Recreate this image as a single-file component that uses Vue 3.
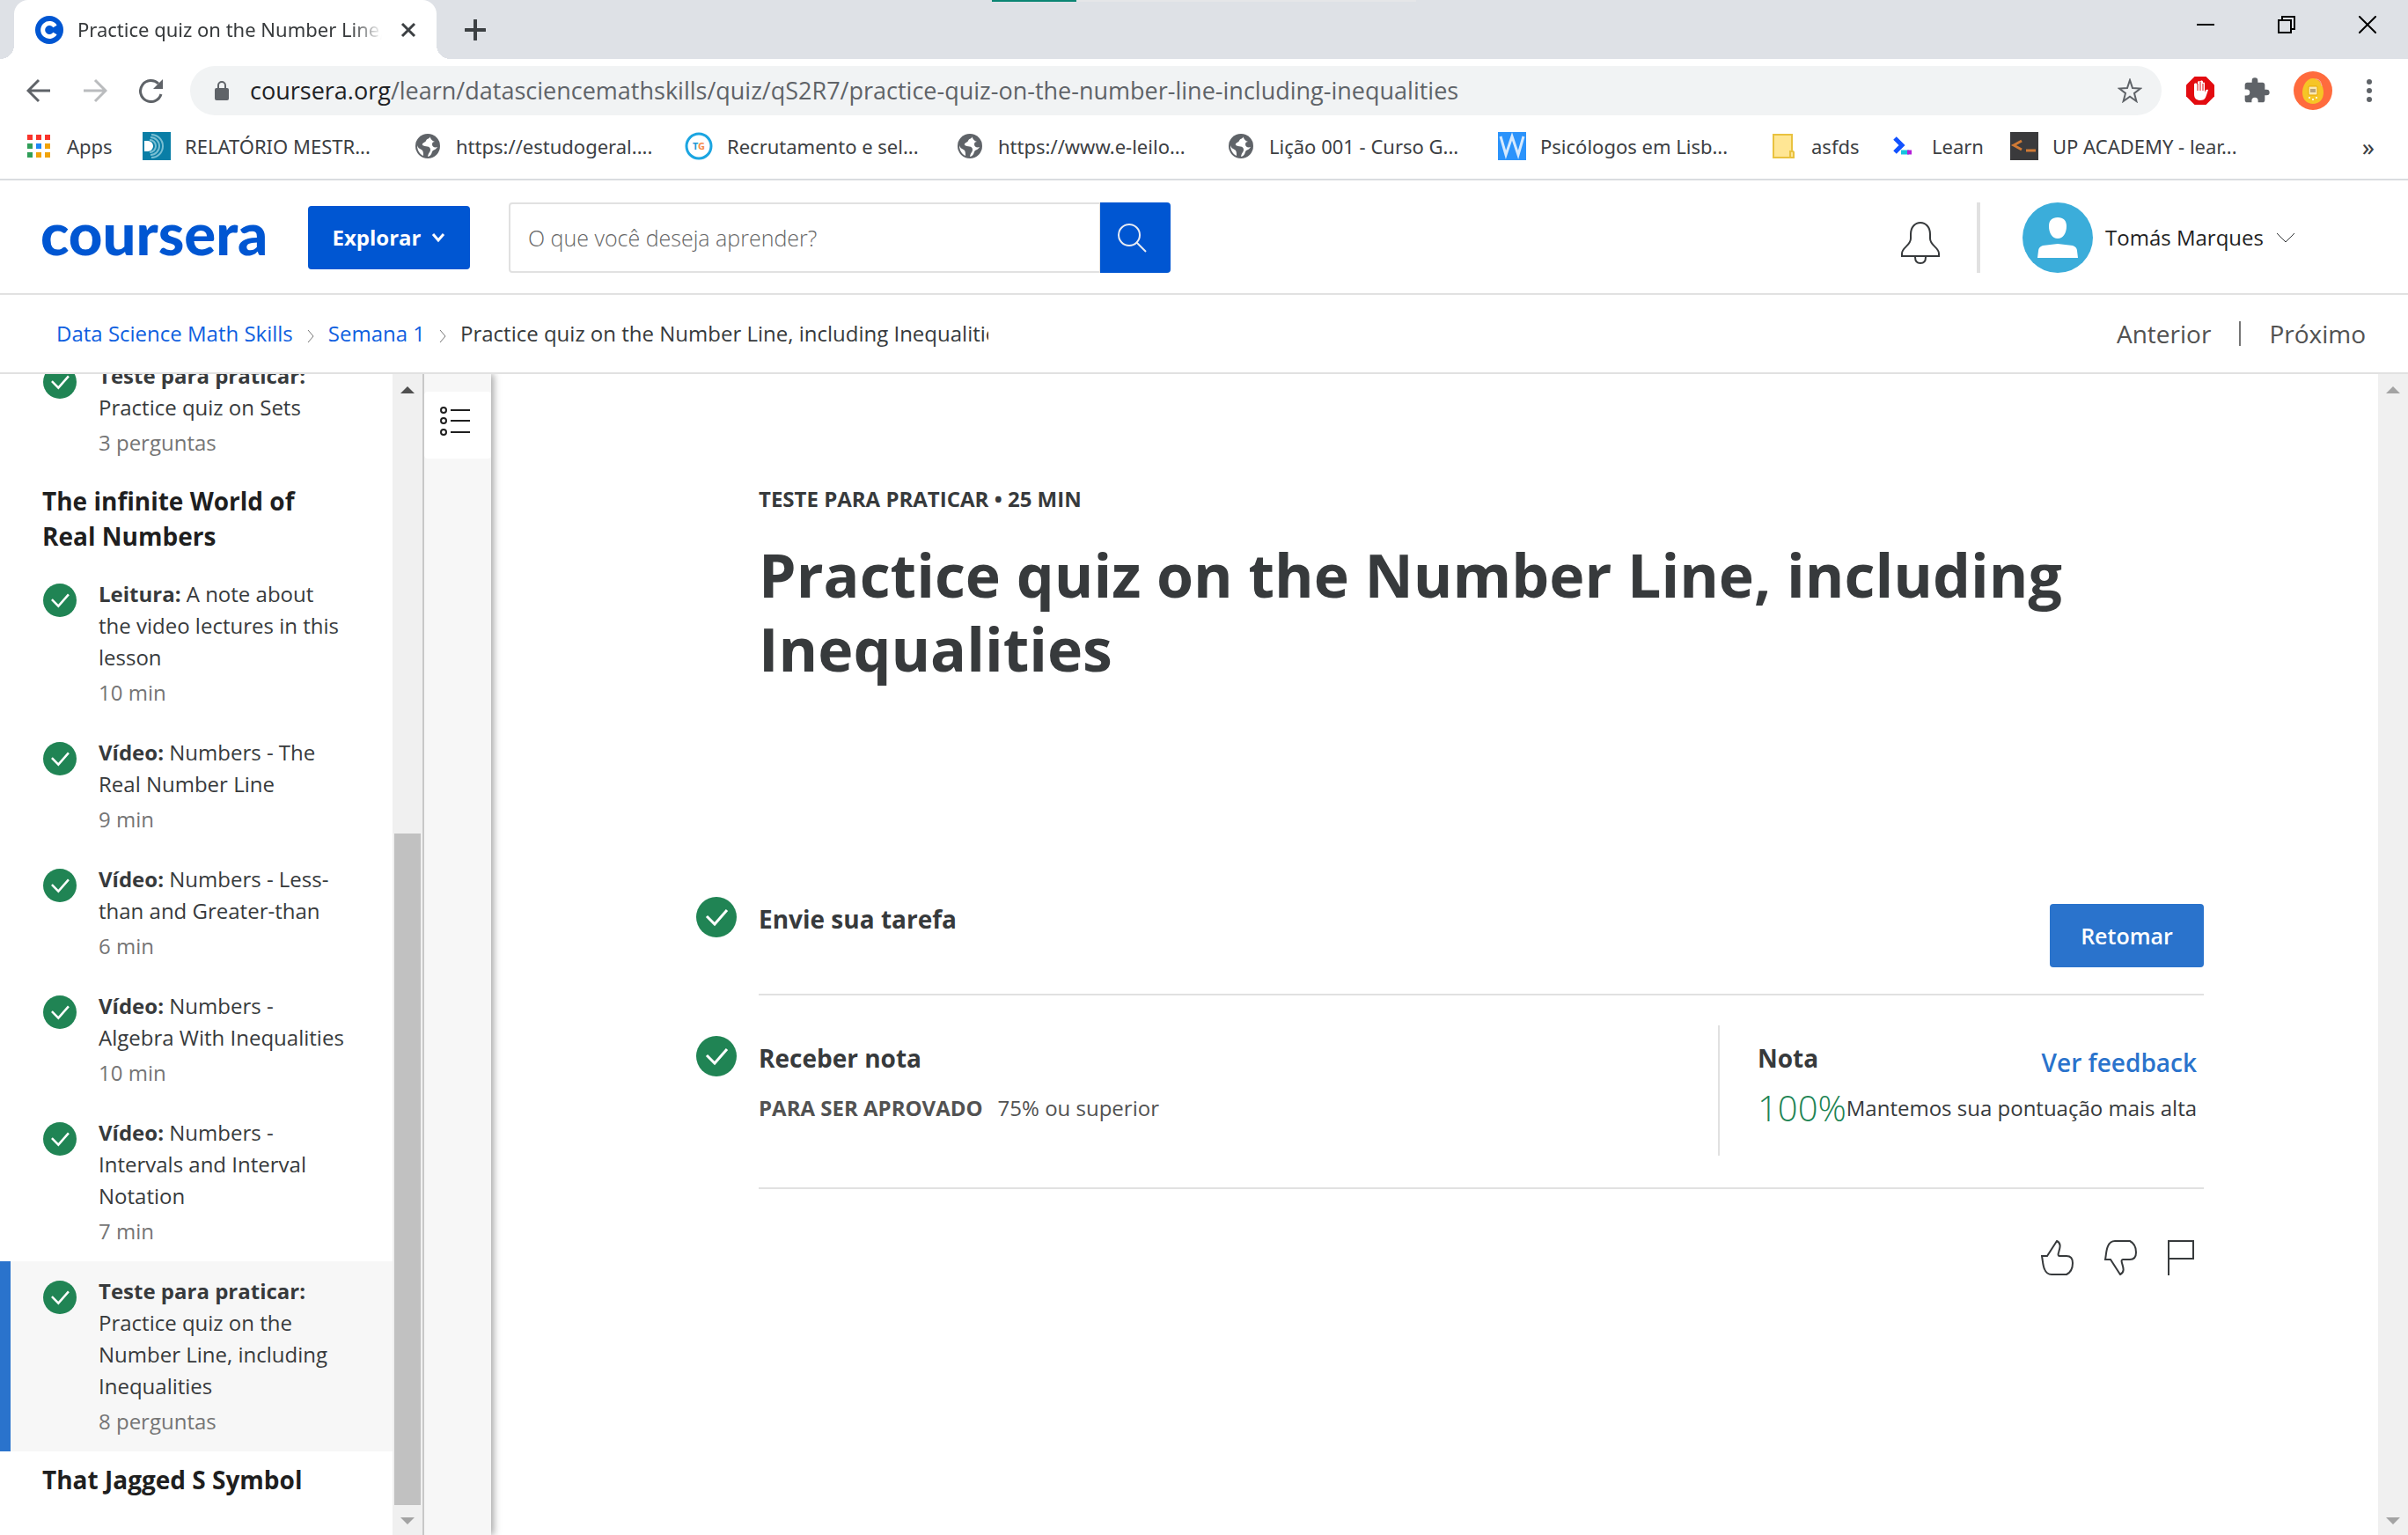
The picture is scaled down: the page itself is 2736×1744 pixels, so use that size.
<script setup>
import { ref } from 'vue'

const address = ref('/learn/datasciencemathskills/quiz/qS2R7/practice-quiz-on-the-number-line-including-inequalities')
const query = ref('')

const bookmarks = [
  { icon: 'apps', text: 'Apps', size: 'first' },
  { icon: 'waves', text: 'RELATÓRIO MESTR...', size: 'long' },
  { icon: 'globe', text: 'https://estudogeral....', size: 'long' },
  { icon: 'tg', text: 'Recrutamento e sel...', size: 'long' },
  { icon: 'globe', text: 'https://www.e-leilo...', size: 'long' },
  { icon: 'globe', text: 'Lição 001 - Curso G...', size: 'long' },
  { icon: 'w', text: 'Psicólogos em Lisb...', size: 'long' },
  { icon: 'folder', text: 'asfds', size: 'short' },
  { icon: 'learn', text: 'Learn', size: 'short' },
  { icon: 'up', text: 'UP ACADEMY - lear...', size: 'long' },
]

const lessons = [
  {
    title: '',
    items: [{ kind: 'Teste para praticar:', name: 'Practice quiz on Sets', meta: '3 perguntas' }],
  },
  {
    title: 'The infinite World of Real Numbers',
    items: [
      { kind: 'Leitura:', name: 'A note about the video lectures in this lesson', meta: '10 min' },
      { kind: 'Vídeo:', name: 'Numbers - The Real Number Line', meta: '9 min' },
      { kind: 'Vídeo:', name: 'Numbers - Less-than and Greater-than', meta: '6 min' },
      { kind: 'Vídeo:', name: 'Numbers - Algebra With Inequalities', meta: '10 min' },
      { kind: 'Vídeo:', name: 'Numbers - Intervals and Interval Notation', meta: '7 min' },
      { kind: 'Teste para praticar:', name: 'Practice quiz on the Number Line, including Inequalities', meta: '8 perguntas', current: true },
    ],
  },
  { title: 'That Jagged S Symbol', items: [] },
]
</script>

<template>
  <div class="window">
    <header class="browser">
      <div class="tabstrip">
        <div class="tab">
          <svg class="favicon" viewBox="0 0 32 32" width="32" height="32" aria-hidden="true">
            <circle cx="16" cy="16" r="16" fill="#0056d2" />
            <path d="M22.5 12a7.5 7.5 0 1 0 0 8" fill="none" stroke="#fff" stroke-width="5" />
          </svg>
          <span class="tab-title">Practice quiz on the Number Line, including</span>
          <button class="plain tab-close" aria-label="Close tab">
            <svg viewBox="0 0 18 18" width="18" height="18"><path d="M2 2l14 14M16 2L2 16" stroke="#3c4043" stroke-width="3" /></svg>
          </button>
        </div>
        <button class="plain new-tab" aria-label="New tab">
          <svg viewBox="0 0 24 24" width="24" height="24"><path d="M12 1v22M1 12h22" stroke="#3c4043" stroke-width="4" stroke-linecap="round" /></svg>
        </button>
        <div class="share-strip"><span></span></div>
        <div class="controls">
          <button class="plain" aria-label="Minimize">
            <svg viewBox="0 0 20 20" width="20" height="20"><path d="M0 10h20" stroke="#000" stroke-width="2" /></svg>
          </button>
          <button class="plain" aria-label="Restore">
            <svg viewBox="0 0 20 20" width="20" height="20"><path d="M1 5h14v14H1zM5 5V1h14v14h-4" fill="none" stroke="#000" stroke-width="2" /></svg>
          </button>
          <button class="plain" aria-label="Close">
            <svg viewBox="0 0 20 20" width="20" height="20"><path d="M0 0l20 20M20 0L0 20" stroke="#000" stroke-width="2" /></svg>
          </button>
        </div>
      </div>

      <div class="toolbar">
        <button class="plain tool" aria-label="Back">
          <svg viewBox="0 0 28 28" width="28" height="28"><path d="M27 14H3M14 2L2 14l12 12" fill="none" stroke="#5f6368" stroke-width="3" /></svg>
        </button>
        <button class="plain tool" aria-label="Forward">
          <svg viewBox="0 0 28 28" width="28" height="28"><path d="M1 14h24M14 2l12 12-12 12" fill="none" stroke="#babcbe" stroke-width="3" /></svg>
        </button>
        <button class="plain tool" aria-label="Reload">
          <svg viewBox="0 0 28 28" width="28" height="28"><path d="M25 18a12 12 0 1 1-3-12" fill="none" stroke="#5f6368" stroke-width="3" /><path d="M27 1v11H16z" fill="#5f6368" /></svg>
        </button>
        <div class="omnibox">
          <svg viewBox="0 0 16 22" width="16" height="22" aria-hidden="true"><rect y="8" width="16" height="14" rx="2" fill="#5f6368" /><path d="M4 9V5a4 4 0 0 1 8 0v4" fill="none" stroke="#5f6368" stroke-width="2" /></svg>
          <label class="host" for="address">coursera.org</label>
          <input id="address" v-model="address" class="address" type="text" />
          <button class="plain" aria-label="Bookmark this page">
            <svg viewBox="0 0 28 28" width="28" height="28"><path d="M14 2l3 9 9 .6-7 5.400 2.400 9L14 20.800 6.600 26 9 17l-7-5.400 9-.6z" fill="none" stroke="#5f6368" stroke-width="2" /></svg>
          </button>
        </div>
        <button class="plain tool" aria-label="Ad blocker">
          <svg viewBox="0 0 32 32" width="32" height="32">
            <path d="M9.500 0h13L32 9.500v13L22.500 32h-13L0 22.500v-13z" fill="#e30b10" />
            <path d="M9 9v11c0 5 3 7 7 7 5 0 6-3 7-6l2-6c-2-1-3 0-4 3V8c0-2-2-2-2 0V6c0-2-3-2-3 0-1-2-3-1-3 1v2c-1-2-4-2-4 0z" fill="#fff" />
            <path d="M13 8v8M16 6v10M19 8v8" stroke="#e30b10" stroke-width="1" />
          </svg>
        </button>
        <button class="plain tool" aria-label="Extensions">
          <svg viewBox="0 0 24 24" width="32" height="32"><path d="M20.500 11H19V7c0-1.100-.9-2-2-2h-4V3.500a2.500 2.500 0 0 0-5 0V5H4c-1.100 0-2 .9-2 2v3.800h1.500a2.700 2.700 0 0 1 0 5.400H2V20c0 1.100.9 2 2 2h3.800v-1.500a2.700 2.700 0 0 1 5.400 0V22H17c1.100 0 2-.9 2-2v-4h1.500a2.500 2.500 0 0 0 0-5z" fill="#5f6368" /></svg>
        </button>
        <button class="plain tool" aria-label="Profile">
          <svg viewBox="0 0 44 44" width="44" height="44">
            <circle cx="22" cy="22" r="22" fill="#ff6b3d" />
            <path d="M22 8c7 0 12 8 12 16s-5 13-12 13-12-5-12-13S15 8 22 8z" fill="#f6c526" />
            <path d="M25 9c5 0 6 3 7 8" fill="none" stroke="#ffb199" stroke-width="1" />
            <rect x="17" y="17" width="10" height="10" rx="1" fill="#fbe9b0" stroke="#e9a800" stroke-width="1" />
            <rect x="19" y="20" width="6" height="4" fill="#b9a37a" />
            <path d="M17 30h2M25 30h2M21 32h2" stroke="#fff3cf" stroke-width="2" />
          </svg>
        </button>
        <button class="plain tool" aria-label="Menu">
          <svg viewBox="0 0 6 26" width="6" height="26"><g fill="#5f6368"><circle cx="3" cy="3" r="3" /><circle cx="3" cy="13" r="3" /><circle cx="3" cy="23" r="3" /></g></svg>
        </button>
      </div>

      <nav class="bookmarks" aria-label="Bookmarks">
        <a v-for="b in bookmarks" :key="b.text" href="#" class="bookmark" :class="b.size">
          <svg v-if="b.icon === 'apps'" viewBox="0 0 32 32" width="32" height="32">
            <path d="M3 3h6v6H3zM13 3h6v6h-6zM23 3h6v6h-6z" fill="#f9342b" />
            <path d="M3 13h6v6H3zM3 23h6v6H3z" fill="#2f9e58" />
            <path d="M13 13h6v6h-6z" fill="#1e88f5" />
            <path d="M23 13h6v6h-6zM13 23h6v6h-6zM23 23h6v6h-6z" fill="#f0a30a" />
          </svg>
          <svg v-else-if="b.icon === 'waves'" viewBox="0 0 32 32" width="32" height="32">
            <rect width="32" height="32" fill="#0a7ea6" />
            <path d="M2 10h4a6 6 0 0 1 0 12H2z" fill="#fff" />
            <g fill="none" stroke="#79bfd3" stroke-width="2"><path d="M8 9a7 7 0 1 1 0 14M9 6a10 10 0 1 1 0 20M10 3a13 13 0 1 1 0 26" /></g>
          </svg>
          <svg v-else-if="b.icon === 'globe'" viewBox="0 0 32 32" width="32" height="32">
            <circle cx="16" cy="16" r="14" fill="#5f6368" />
            <path d="M19 4c0 4-4 3-5 6-1 2-5 2-4 5 3 2 9 0 9 5 0 3-2 3-3 8 5-1 4-5 6-7 2-1 4-2 5-4-3 1-6 0-6-3 0-2 1-3 3-3-3-1-6-4-5-7zM4 15c1 4 4 4 6 6 1 2 1 3 1 6-4-2-7-6-7-12z" fill="#fff" />
          </svg>
          <svg v-else-if="b.icon === 'tg'" viewBox="0 0 32 32" width="32" height="32">
            <circle cx="16" cy="16" r="14" fill="#fff" stroke="#1ba5e1" stroke-width="3" />
            <text x="9" y="20" font-size="11" font-weight="700" fill="#1c9ad6">T</text>
            <text x="15" y="20" font-size="11" font-weight="700" fill="#f58a4b">G</text>
          </svg>
          <svg v-else-if="b.icon === 'w'" viewBox="0 0 32 32" width="32" height="32">
            <rect width="32" height="32" fill="#2b93fb" />
            <path d="M3 5l6 21 7-21 7 21 6-21" fill="none" stroke="#d6eafe" stroke-width="3" />
          </svg>
          <svg v-else-if="b.icon === 'folder'" viewBox="0 0 32 32" width="32" height="32">
            <path d="M5 3h21v18l2 2v6H5z" fill="#ffe694" stroke="#e9c23f" stroke-width="2" />
            <path d="M24 28v-6h3" fill="none" stroke="#e9c23f" stroke-width="2" />
          </svg>
          <svg v-else-if="b.icon === 'learn'" viewBox="0 0 32 32" width="32" height="32">
            <path d="M6 7l8 8-8 8" fill="none" stroke="#1252ff" stroke-width="5" />
            <path d="M13 23h9" stroke="#17c3e0" stroke-width="5" /><path d="M20 23h5" stroke="#b41fd8" stroke-width="5" />
          </svg>
          <svg v-else viewBox="0 0 32 32" width="32" height="32">
            <rect width="32" height="32" fill="#3a3a3c" />
            <path d="M13 10l-9 5 9 5M18 21h11" fill="none" stroke="#d07a35" stroke-width="3" />
          </svg>
          <span>{{ b.text }}</span>
        </a>
        <button class="plain overflow" aria-label="More bookmarks">»</button>
      </nav>
    </header>

    <header class="site">
      <a href="#" class="logo">coursera</a>
      <button class="explore">
        Explorar
        <svg viewBox="0 0 16 12" width="16" height="12" aria-hidden="true"><path d="M2 2l6 7 6-7" fill="none" stroke="#fff" stroke-width="3" /></svg>
      </button>
      <form class="search" @submit.prevent>
        <input v-model="query" type="text" aria-label="Buscar" placeholder="O que você deseja aprender?" />
        <button aria-label="Pesquisar">
          <svg viewBox="0 0 34 34" width="34" height="34"><circle cx="14" cy="14" r="12" fill="none" stroke="#e8ecf4" stroke-width="2" /><path d="M22 22l11 11" stroke="#e8ecf4" stroke-width="2" /></svg>
        </button>
      </form>
      <div class="account">
        <button class="plain bell" aria-label="Notificações">
          <svg viewBox="0 0 44 48" width="44" height="48">
            <path d="M1 39v-3c0-7 10-9 10-17v-5c0-8 5-13 11-13s11 5 11 13v5c0 8 10 10 10 17v3zM16 40c0 4 2 7 6 7s6-3 6-7" fill="none" stroke="#373a3c" stroke-width="2" />
          </svg>
        </button>
        <button class="plain user">
          <svg viewBox="0 0 80 80" width="80" height="80" aria-hidden="true">
            <circle cx="40" cy="40" r="40" fill="#3badda" />
            <path d="M40 17c7 0 10 4 10 10 0 8-4 14-10 14s-10-6-10-14c0-6 3-10 10-10zM17 63l1-8c0-3 2-5 5-6l17-2 17 2c3 1 5 3 5 6l1 8z" fill="#fff" />
          </svg>
          <span>Tomás Marques</span>
          <svg viewBox="0 0 22 12" width="22" height="12" aria-hidden="true"><path d="M1 1l10 10L21 1" fill="none" stroke="#373a3c" stroke-width="1" /></svg>
        </button>
      </div>
    </header>

    <nav class="crumbs" aria-label="Trilha">
      <a href="#">Data Science Math Skills</a>
      <svg viewBox="0 0 8 16" width="8" height="16" aria-hidden="true"><path d="M1 1l6 7-6 7" fill="none" stroke="#777" stroke-width="1" /></svg>
      <a href="#">Semana 1</a>
      <svg viewBox="0 0 8 16" width="8" height="16" aria-hidden="true"><path d="M1 1l6 7-6 7" fill="none" stroke="#777" stroke-width="1" /></svg>
      <span class="here">Practice quiz on the Number Line, including Inequalities</span>
      <div class="pager">
        <a href="#">Anterior</a>
        <a href="#">Próximo</a>
      </div>
    </nav>

    <div class="body">
      <aside class="sidebar">
        <div class="outline">
          <div class="outline-list">
            <section v-for="lesson in lessons" :key="lesson.title">
              <h2 v-if="lesson.title">{{ lesson.title }}</h2>
              <a v-for="item in lesson.items" :key="item.name" href="#" class="item" :class="{ current: item.current }">
                <svg class="tick" viewBox="0 0 46 46" width="38" height="38" aria-hidden="true"><circle cx="23" cy="23" r="23" fill="#208454" /><path d="M12 22l9 9 14-16" fill="none" stroke="#fff" stroke-width="3" /></svg>
                <span class="item-text">
                  <span class="item-name"><strong>{{ item.kind }}</strong> {{ item.name }}</span>
                  <span class="item-meta">{{ item.meta }}</span>
                </span>
              </a>
            </section>
          </div>
        </div>
        <div class="scrollbar">
          <svg viewBox="0 0 34 34" width="34" height="34"><path d="M9 22l8-8 8 8z" fill="#505050" /></svg>
          <div class="track"><div class="thumb"></div></div>
          <svg viewBox="0 0 34 34" width="34" height="34"><path d="M9 14l8 8 8-8z" fill="#a3a3a3" /></svg>
        </div>
      </aside>

      <div class="rail">
        <button aria-label="Conteúdo">
          <svg viewBox="0 0 36 36" width="36" height="36">
            <g fill="none" stroke="#1f1f1f" stroke-width="2"><circle cx="5" cy="5" r="3" /><circle cx="5" cy="17" r="3" /><circle cx="5" cy="30" r="3" /><path d="M13 5h22M13 17h22M13 30h22" /></g>
          </svg>
        </button>
      </div>

      <main class="content">
        <p class="eyebrow">TESTE PARA PRATICAR • 25 MIN</p>
        <h1>Practice quiz on the Number Line, including Inequalities</h1>

        <section class="step">
          <svg class="step-tick" viewBox="0 0 46 46" width="46" height="46" aria-hidden="true"><circle cx="23" cy="23" r="23" fill="#208454" /><path d="M12 22l9 9 14-16" fill="none" stroke="#fff" stroke-width="3" /></svg>
          <h3>Envie sua tarefa</h3>
          <button class="retake">Retomar</button>
        </section>

        <section class="step graded">
          <svg class="step-tick" viewBox="0 0 46 46" width="46" height="46" aria-hidden="true"><circle cx="23" cy="23" r="23" fill="#208454" /><path d="M12 22l9 9 14-16" fill="none" stroke="#fff" stroke-width="3" /></svg>
          <div class="step-text">
            <h3>Receber nota</h3>
            <p class="pass"><strong>PARA SER APROVADO</strong><span>75% ou superior</span></p>
          </div>
          <div class="grade">
            <div class="grade-top">
              <h3>Nota</h3>
              <a href="#">Ver feedback</a>
            </div>
            <p class="score"><span class="value">100%</span><span>Mantemos sua pontuação mais alta</span></p>
          </div>
        </section>

        <div class="feedback">
          <button class="plain" aria-label="Gostei">
            <svg viewBox="0 0 38 40" width="38" height="40"><path d="M1 18h6L18 1c6 3 3 9 2 13-1 3 0 4 1 4h8c5 0 7 3 7 8 0 6-3 11-7 13H12c-3 0-6-1-8-6-2-4-2-10-3-15z" fill="none" stroke="#373a3c" stroke-width="2" /></svg>
          </button>
          <button class="plain" aria-label="Não gostei">
            <svg viewBox="0 0 38 40" width="38" height="40"><path d="M1 22h6l11 17c6-3 3-9 2-13-1-3 0-4 1-4h8c5 0 7-3 7-8 0-6-3-11-7-13H12C9 1 6 2 4 7 2 11 2 17 1 22z" fill="none" stroke="#373a3c" stroke-width="2" /></svg>
          </button>
          <button class="plain" aria-label="Sinalizar">
            <svg viewBox="0 0 30 40" width="30" height="40"><path d="M1 40V1h28v20H1" fill="none" stroke="#373a3c" stroke-width="2" /></svg>
          </button>
        </div>
      </main>

      <div class="scrollbar">
        <svg viewBox="0 0 34 34" width="34" height="34"><path d="M9 22l8-8 8 8z" fill="#a3a3a3" /></svg>
        <div class="track"></div>
        <svg viewBox="0 0 34 34" width="34" height="34"><path d="M9 14l8 8 8-8z" fill="#a3a3a3" /></svg>
      </div>
    </div>
  </div>
</template>

<style>
body {
  margin: 0;
  background: #fff;
}
</style>

<style scoped>
* {
  box-sizing: border-box;
}
.window {
  display: flex;
  flex-direction: column;
  height: 100vh;
  overflow: hidden;
  font: 24px/36px "Open Sans", sans-serif;
  color: #373a3c;
}
a {
  color: inherit;
  text-decoration: none;
}
h1,
h2,
h3,
p {
  margin: 0;
}
svg {
  display: block;
  flex: none;
}
button,
input {
  font: inherit;
  color: inherit;
}
.plain {
  display: flex;
  align-items: center;
  justify-content: center;
  flex: none;
  padding: 0;
  border: 0;
  background: none;
}

/* Browser frame */
.browser {
  flex: none;
  font-family: "Noto Sans", sans-serif;
  border-bottom: 2px solid #dadce0;
}
.tabstrip {
  position: relative;
  display: flex;
  align-items: center;
  height: 67px;
  padding-left: 16px;
  background: #dee1e6;
}
.tab {
  position: relative;
  display: flex;
  align-items: center;
  width: 480px;
  height: 67px;
  padding: 0 23px 0 24px;
  border-radius: 16px 16px 0 0;
  background: #fff;
}
.tab::before,
.tab::after {
  content: "";
  position: absolute;
  bottom: 0;
  width: 16px;
  height: 16px;
}
.tab::before {
  left: -16px;
  background: radial-gradient(circle at 0 0, #dee1e6 16px, #fff 16px);
}
.tab::after {
  right: -16px;
  background: radial-gradient(circle at 100% 0, #dee1e6 16px, #fff 16px);
}
.tab-title {
  flex: 1;
  min-width: 0;
  margin-left: 16px;
  padding-bottom: 2px;
  overflow: hidden;
  white-space: nowrap;
  font-size: 22px;
  mask-image: linear-gradient(to right, #000 88%, transparent 98%);
}
.tab-close {
  margin-left: 14px;
}
.new-tab {
  width: 88px;
  height: 56px;
}
.share-strip {
  position: absolute;
  top: 0;
  left: 41.2%;
  width: 482px;
  height: 2px;
  background: #e5e6e8;
}
.share-strip span {
  display: block;
  width: 96px;
  height: 2px;
  background: #0a8573;
}
.controls {
  display: flex;
  align-self: flex-start;
  margin-left: auto;
}
.controls button {
  width: 92px;
  height: 56px;
}
.toolbar {
  display: flex;
  padding: 8px 12px;
}
.tool {
  width: 64px;
  height: 56px;
}
.omnibox {
  display: flex;
  align-items: center;
  flex: 1;
  height: 56px;
  margin: 0 12px;
  padding: 0 22px 0 28px;
  border-radius: 28px;
  background: #f1f3f4;
  font: 27px/40px "Open Sans", sans-serif;
}
.host {
  margin-left: 24px;
  color: #202124;
}
.address {
  flex: 1;
  min-width: 0;
  padding: 0;
  border: 0;
  outline: 0;
  background: none;
  color: #5f6368;
}
.bookmarks {
  display: flex;
  align-items: center;
  height: 64px;
  padding: 0 38px 10px 28px;
  font-size: 22px;
  color: #3c4043;
}
.bookmark {
  display: flex;
  align-items: center;
  gap: 16px;
  width: 137px;
  white-space: nowrap;
}
.bookmark.first {
  width: 134px;
}
.bookmark.long {
  width: 308px;
}
.overflow {
  margin-left: auto;
  font-size: 28px;
}

/* Site header */
.site {
  display: flex;
  align-items: center;
  flex: none;
  height: 130px;
  padding: 2px 128px 0 46px;
  border-bottom: 2px solid #e1e1e1;
}
.logo {
  width: 304px;
  padding-bottom: 12px;
  font: 900 67px/72px Lato, sans-serif;
  color: #0056d2;
}
.explore {
  display: flex;
  align-items: center;
  justify-content: center;
  gap: 12px;
  width: 184px;
  height: 72px;
  padding: 0;
  border: 0;
  border-radius: 4px;
  background: #0056d2;
  color: #fff;
  font-weight: 700;
}
.search {
  display: flex;
  width: 752px;
  height: 80px;
  margin-left: 44px;
}
.search input {
  flex: 1;
  min-width: 0;
  padding: 0 20px;
  border: 2px solid #e1e1e1;
  border-right-width: 1px;
  border-radius: 4px 0 0 4px;
  outline: 0;
  font-size: 25px;
  font-weight: 300;
}
.search input::placeholder {
  color: #666;
  opacity: 1;
}
.search button {
  display: flex;
  align-items: center;
  justify-content: center;
  width: 80px;
  padding: 0 8px 0 0;
  border: 0;
  border-radius: 0 4px 4px 0;
  background: #0056d2;
}
.account {
  display: flex;
  align-items: center;
  margin-left: auto;
}
.bell {
  height: 80px;
  padding: 12px 42px 0 0;
  border-right: 4px solid #e1e1e1;
}
.user {
  gap: 14px;
  margin-left: 48px;
  color: #1f1f1f;
}

/* Breadcrumb bar */
.crumbs {
  display: flex;
  align-items: center;
  flex: none;
  height: 90px;
  padding: 0 48px 0 64px;
  border-bottom: 2px solid #e1e1e1;
  white-space: nowrap;
}
.crumbs > a {
  color: #0f5fe0;
}
.crumbs svg {
  margin: 6px 16px 0;
}
.here {
  width: 600px;
  overflow: hidden;
}
.pager {
  display: flex;
  align-items: center;
  margin-left: auto;
  font-size: 28px;
  color: #525252;
}
.pager a + a {
  margin-left: 32px;
  padding-left: 32px;
  border-left: 2px solid #757575;
  line-height: 28px;
}

/* Body */
.body {
  display: flex;
  flex: 1;
  min-height: 0;
}
.scrollbar {
  display: flex;
  flex-direction: column;
  flex: none;
  width: 34px;
  background: #f0f0f0;
}
.track {
  display: flex;
  flex-direction: column;
  justify-content: flex-end;
  flex: 1;
}
.thumb {
  height: 61%;
  margin: 0 2px;
  background: #c1c1c1;
}
.sidebar {
  display: flex;
  flex: none;
  width: 482px;
  border-right: 2px solid #c8c8c8;
}
.outline {
  flex: 1;
  min-width: 0;
  overflow: hidden;
}
.outline-list {
  margin-top: -32px;
}
h2 {
  padding: 12px 96px 12px 48px;
  font-size: 28px;
  line-height: 40px;
  color: #1f1f1f;
}
.item {
  display: flex;
  gap: 25px;
  padding: 16px 50px 16px 37px;
  border-left: 12px solid transparent;
}
.item.current {
  border-left-color: #2a73cc;
  background: #f7f7f7;
}
.tick {
  margin-top: 6px;
}
.item-text {
  display: flex;
  flex-direction: column;
  gap: 4px;
}
.item-meta {
  color: #757575;
}
.rail {
  flex: none;
  width: 76px;
  padding-top: 20px;
  background: #f7f7f7;
  box-shadow: 3px 0 8px rgba(0, 0, 0, 0.35);
  clip-path: inset(0 -16px 0 0);
}
.rail button {
  width: 76px;
  height: 76px;
  padding: 0 0 8px 17px;
  border: 0;
  border-radius: 4px;
  background: #fff;
}

.content {
  flex: 1;
  min-width: 0;
  padding: 124px 198px 0 231px;
}
.eyebrow {
  margin-left: 73px;
  font-weight: 700;
}
h1 {
  margin: 26px 0 240px 73px;
  font-size: 68px;
  line-height: 84px;
}
h3 {
  font-size: 28px;
  line-height: 40px;
}
.step {
  position: relative;
  display: flex;
  justify-content: space-between;
  margin-left: 73px;
  border-bottom: 2px solid #e1e1e1;
}
.step > h3 {
  padding-top: 5px;
}
.step-tick {
  position: absolute;
  top: 0;
  left: -71px;
}
.retake {
  width: 175px;
  height: 72px;
  margin: 8px 0 30px;
  padding: 0;
  border: 0;
  border-radius: 4px;
  background: #2a73cc;
  color: #fff;
  font-size: 25px;
  font-weight: 600;
}
.graded .step-tick {
  top: 46px;
}
.step-text {
  padding-top: 51px;
}
.pass {
  display: flex;
  gap: 17px;
  margin-top: 19px;
  color: #525252;
}
.grade {
  width: 552px;
  height: 148px;
  margin: 34px 0 36px;
  padding: 17px 8px 0 43px;
  border-left: 2px solid #e1e1e1;
}
.grade-top {
  display: flex;
  justify-content: space-between;
}
.grade-top a {
  padding-top: 5px;
  font-size: 28px;
  font-weight: 600;
  line-height: 40px;
  color: #2a73cc;
}
.score {
  display: flex;
  align-items: center;
  margin-top: 4px;
  white-space: nowrap;
}
.value {
  font-size: 40px;
  font-weight: 300;
  line-height: 56px;
  color: #208454;
}
.feedback {
  display: flex;
  justify-content: flex-end;
  gap: 34px;
  padding: 58px 11px 0 0;
}
</style>
